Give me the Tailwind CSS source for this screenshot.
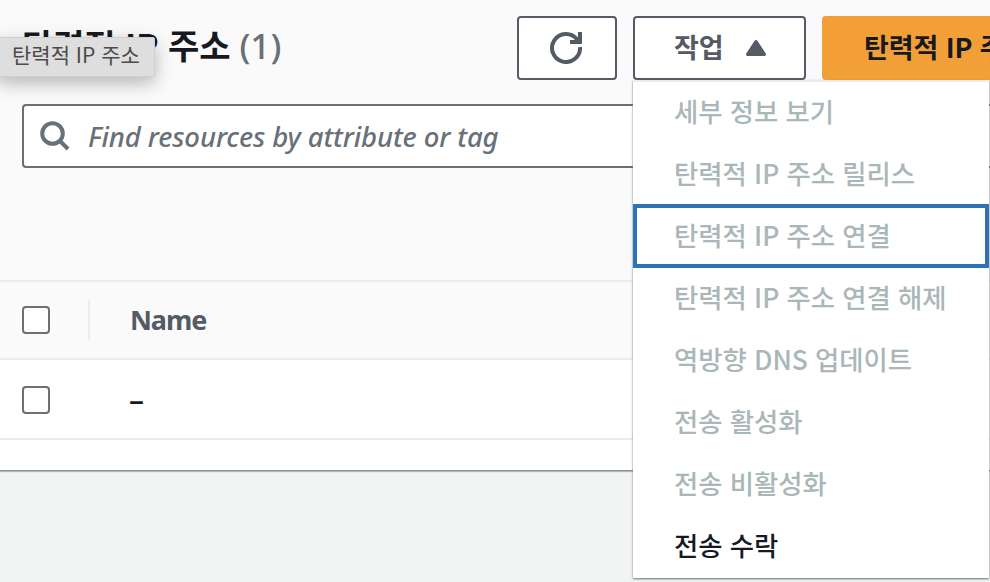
<!DOCTYPE html>
<html lang="ko">
<head>
<meta charset="utf-8">
<title>탄력적 IP 주소</title>
<script src="https://cdn.jsdelivr.net/npm/@tailwindcss/browser@4"></script>
</head>
<body class="relative w-[990px] h-[582px] overflow-hidden bg-[#f2f4f4] font-['Noto_Sans','Noto_Sans_CJK_KR',sans-serif] text-[#16191f] whitespace-nowrap">
<main class="flex flex-col w-[990px] h-[470px] overflow-x-clip bg-white shadow-[0_1px_0_0_#879596,0_2px_1px_0_#b0b8b8]">
  <header class="flex flex-col h-[280px] bg-[#fafafa] pt-4 pl-[22px]">
    <div class="flex h-16">
      <h1 class="w-[495px] shrink-0 flex items-center text-[34px] leading-[60px] h-[60px] font-bold"><span class="font-['Noto_Sans_CJK_KR'] mt-[-2px] tracking-[-0.1px]">탄력적 IP 주소</span><span class="ml-[9px] font-medium text-[#687078] text-[35px]">(1)</span></h1>
      <button class="w-[100px] h-16 shrink-0 flex items-center justify-center rounded-[4px] border-2 border-[#545b64] bg-white">
        <svg class="-ml-[2px] w-8 h-8" viewBox="0 0 32 32" fill="none" stroke="#545b64" stroke-width="4"><path d="M30 15A14 14 0 1 1 27 7.3L28.5 9"/><path d="M30 0V10H20"/></svg>
      </button>
      <button class="ml-4 w-[173px] h-16 shrink-0 flex items-center pl-[39px] rounded-[4px] border-2 border-[#545b64] bg-white text-[#545b64]">
        <span class="-mt-[2px] font-['Noto_Sans_CJK_KR'] font-bold text-[27px] leading-8">작업</span>
        <svg class="ml-[22px] w-5 h-4" viewBox="0 0 20 16" fill="#545b64"><path d="M8.6.8a1.7 1.7 0 0 1 2.8 0l8.2 12.5q1.2 2.7-1.6 2.7H2Q-.8 16 .4 13.3z"/></svg>
      </button>
      <button class="ml-4 w-[168px] overflow-hidden h-16 shrink-0 flex items-center pl-[42px] rounded-l-[4px] bg-[#f29f38] font-['Noto_Sans_CJK_KR'] font-bold text-[27px]"><span class="-mt-[2px] tracking-[-0.1px]">탄력적 IP 주소</span></button>
    </div>
    <div class="mt-6 h-16 w-[968px] flex items-center rounded-l-[4px] border-2 border-r-0 border-[#687078] bg-white pl-4">
      <svg class="w-[30px] h-[30px]" viewBox="0 0 30 30" fill="none" stroke="#687078" stroke-width="4"><circle cx="12.5" cy="12.5" r="10.3"/><path d="M19.5 19.5L28 28"/></svg>
      <span class="mt-[2px] ml-[18px] italic font-medium text-[27.5px] tracking-[-0.12px] text-[#687078]">Find resources by attribute or tag</span>
    </div>
  </header>
  <div class="flex items-center h-20 border-y-2 border-[#eaeded] bg-[#fafafa] pl-[22px]">
    <span class="w-7 h-7 rounded-[4px] border-2 border-[#687078] bg-white"></span>
    <span class="ml-[38px] w-[2px] h-10 bg-[#eaeded]"></span>
    <span class="ml-10 font-bold text-[27px] tracking-[-1.1px] text-[#545b64]">Name</span>
  </div>
  <div class="flex items-center h-20 border-b-2 border-[#eaeded] pt-[2px] pl-[22px]">
    <span class="w-7 h-7 rounded-[4px] border-2 border-[#687078] bg-white"></span>
    <span class="ml-[79px] text-[30px] leading-8 font-medium">–</span>
  </div>
</main>
<ul class="absolute left-[633px] top-[80px] w-[356px] h-[498px] bg-white border-t-2 border-[#eaeded] shadow-[0_1px_2px_0_#687078] font-['Noto_Sans_CJK_KR'] font-medium text-[26.4px] tracking-[-0.05px] text-[#aab7b8] [&>li]:h-[62px] [&>li]:pl-[41px] [&>li]:pb-[5px] [&>li]:flex [&>li]:items-center [&>li]:whitespace-pre">
  <li><span>세부 정보 보기</span></li>
  <li><span>탄력적 IP 주소 릴리스</span></li>
  <li class="relative before:absolute before:left-0 before:-top-[2px] before:w-[356px] before:h-16 before:border-4 before:border-[#3072b8]"><span>탄력적 IP 주소 연결</span></li>
  <li><span>탄력적 IP 주소 연결 해제</span></li>
  <li><span>역방향 DNS 업데이트</span></li>
  <li><span>전송 활성화</span></li>
  <li><span>전송 비활성화</span></li>
  <li class="text-[#16191f]"><span>전송 수락</span></li>
</ul>
<div class="absolute -left-1 top-[37px] w-[159px] h-[40px] flex items-center pl-[15px] pb-[4px] rounded-[2px] border border-[#cfcfcf] bg-[#dedede] shadow-[0_6px_18px_rgba(0,0,0,0.28)] font-['Noto_Sans_CJK_KR'] text-[21px] text-[#4b4b4b]"><span>탄력적 IP 주소</span></div>
</body>
</html>
